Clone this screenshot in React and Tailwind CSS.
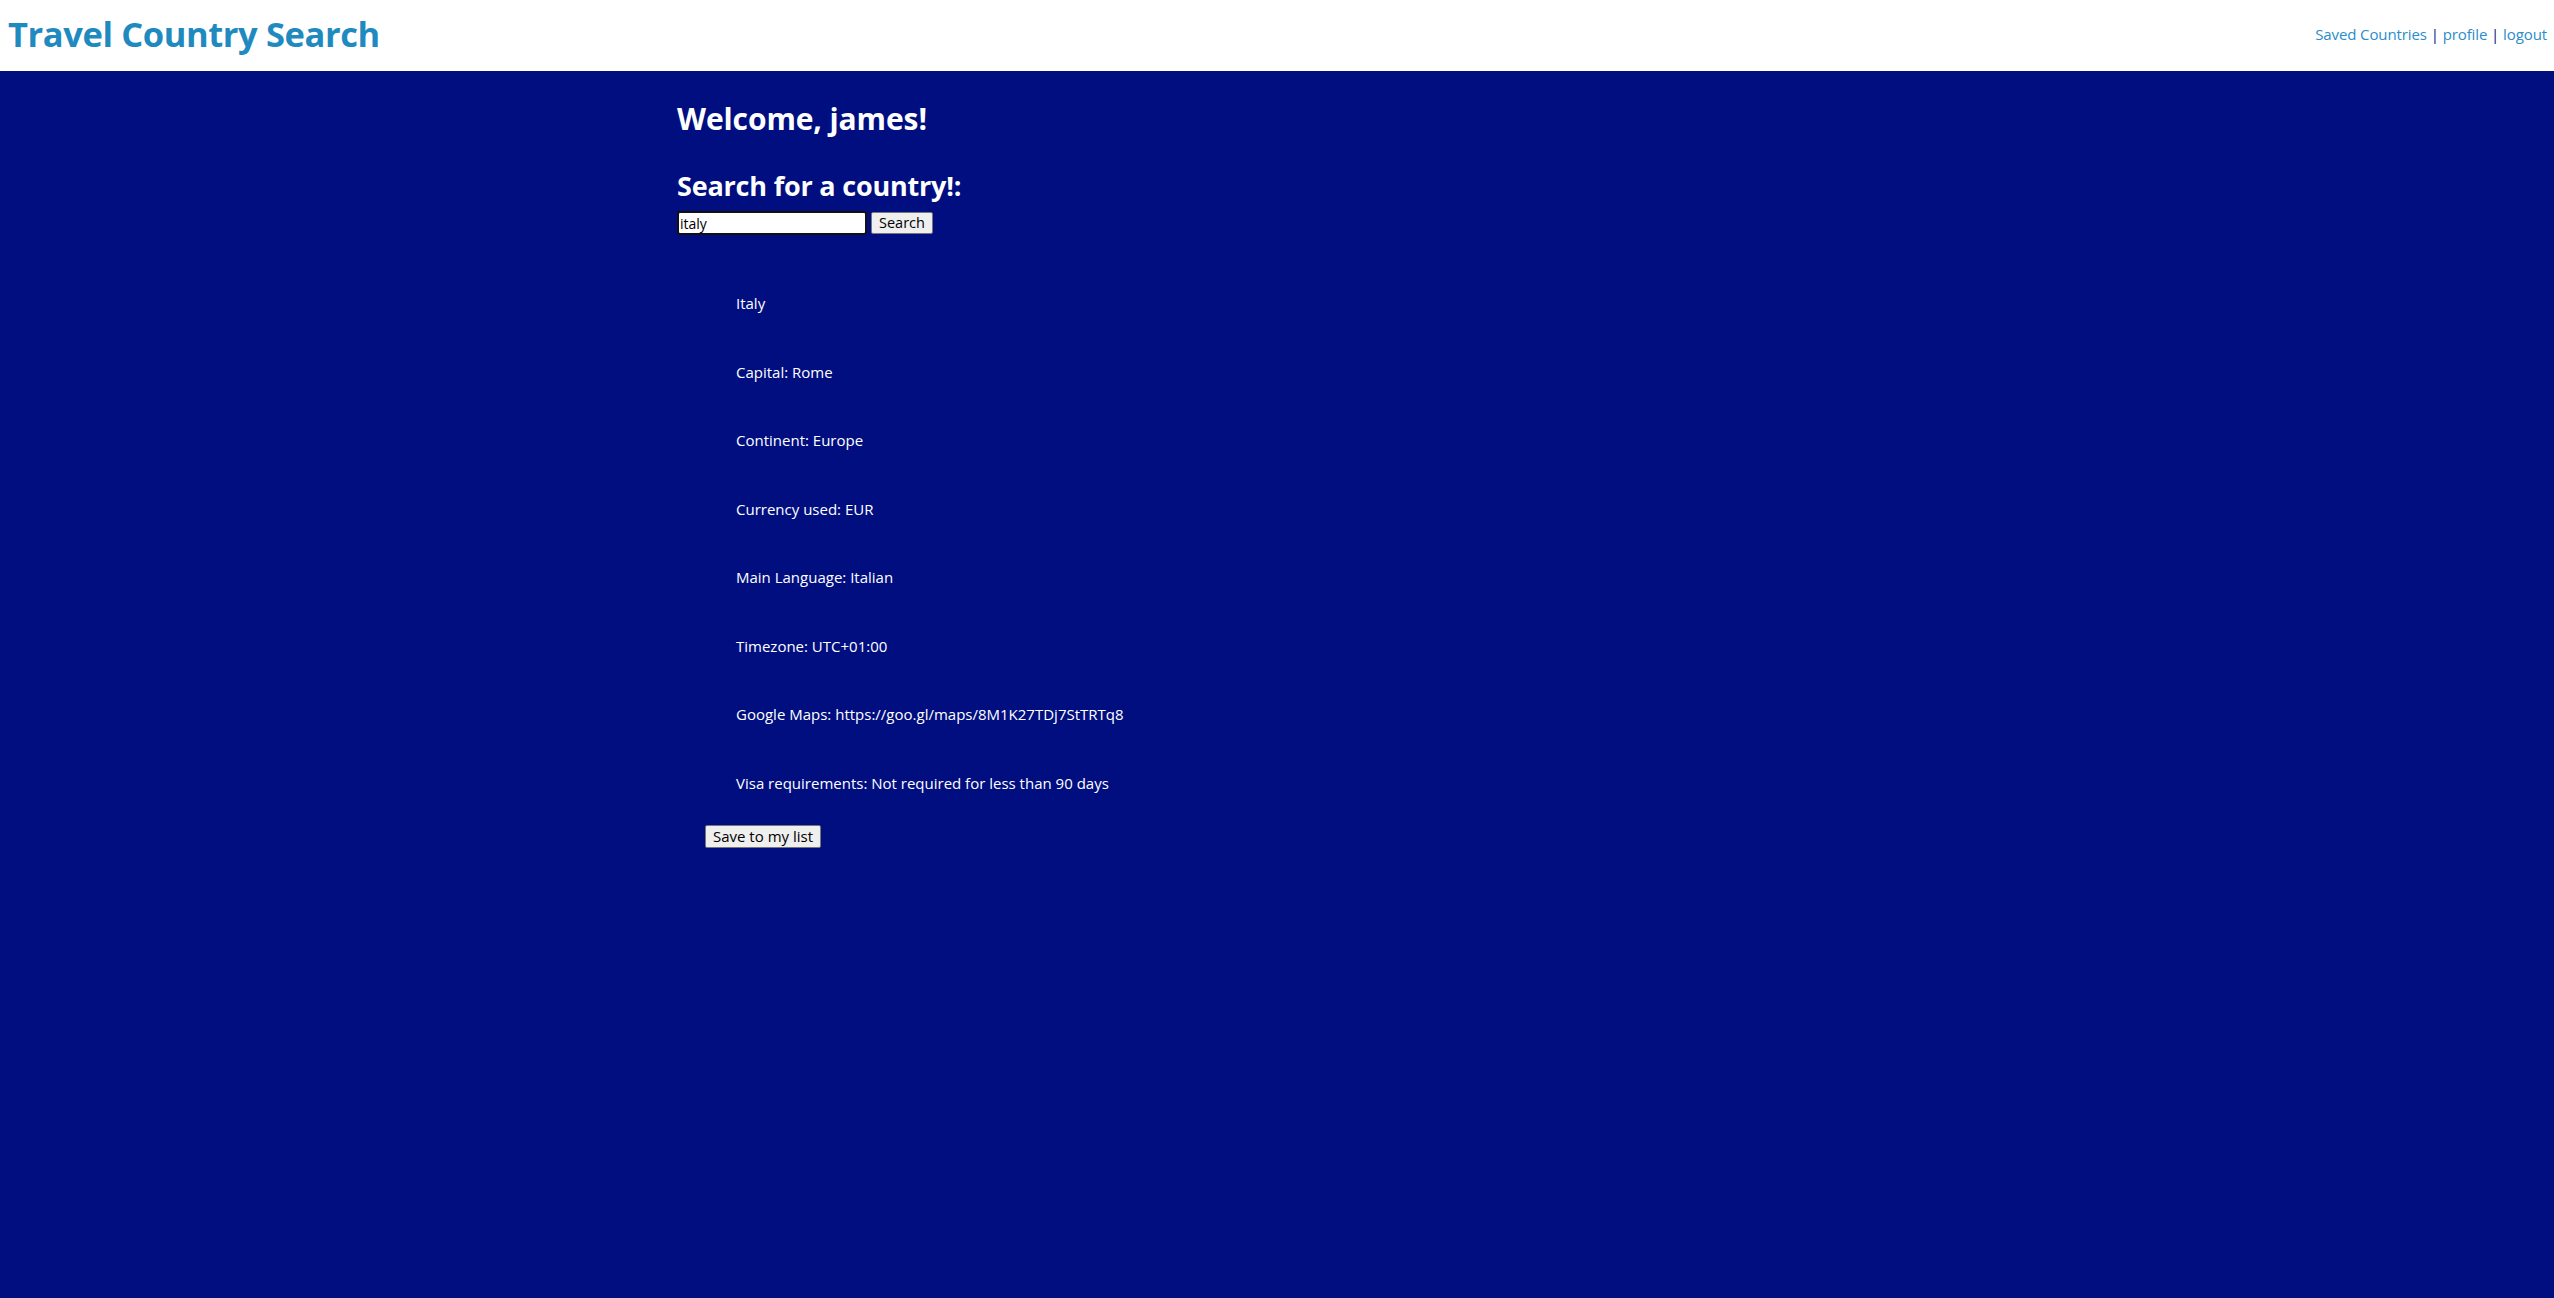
const details = [
  "Italy",
  "Capital: Rome",
  "Continent: Europe",
  "Currency used: EUR",
  "Main Language: Italian",
  "Timezone: UTC+01:00",
  "Google Maps: https://goo.gl/maps/8M1K27TDj7StTRTq8",
  "Visa requirements: Not required for less than 90 days",
]

export default function App() {
  return (
    <div className="min-h-screen bg-[#000e80] font-['Open_Sans',sans-serif] text-white">
      <header className="flex h-[71px] items-center justify-between bg-white pb-[3px] pl-2 pr-[7px]">
        <h1 className="text-[34.5px] font-bold tracking-[-0.4px] text-[#1f8ac0]">
          Travel Country Search
        </h1>
        <nav className="text-[15px] tracking-[-0.1px] text-[#000e80]">
          <a href="#" className="text-[#2a8dcb]">Saved Countries</a> |{" "}
          <a href="#" className="text-[#2a8dcb]">profile</a> |{" "}
          <a href="#" className="text-[#2a8dcb]">logout</a>
        </nav>
      </header>

      <main className="mx-auto w-[1200px] pt-[28px]">
        <h2 className="text-[30px] font-bold leading-[40px] tracking-[-0.1px]">
          Welcome, james!
        </h2>
        <h3 className="mt-[31px] text-[27px] font-bold leading-[32px] tracking-[-0.2px]">
          Search for a country!:
        </h3>
        <div className="mt-[9px] flex items-center gap-[4px]">
          <input
            defaultValue="italy"
            className="h-[24px] w-[190px] rounded-[3px] border-2 border-[#111] bg-white px-[1px] text-[14px] text-black outline-none"
          />
          <button className="h-[22px] rounded-[2px] border border-[#767676] bg-[#efefef] px-[7px] text-[14.5px] leading-none text-black">
            Search
          </button>
        </div>

        <ul className="mt-[57px] flex flex-col gap-[46.5px] pl-[59px]">
          {details.map((line) => (
            <li key={line} className="text-[15px] leading-[22px]">
              {line}
            </li>
          ))}
        </ul>

        <button className="ml-[28px] mt-[31px] h-[23px] rounded-[2px] border border-[#767676] bg-[#efefef] px-[7px] text-[15px] leading-none text-black">
          Save to my list
        </button>
      </main>
    </div>
  )
}
